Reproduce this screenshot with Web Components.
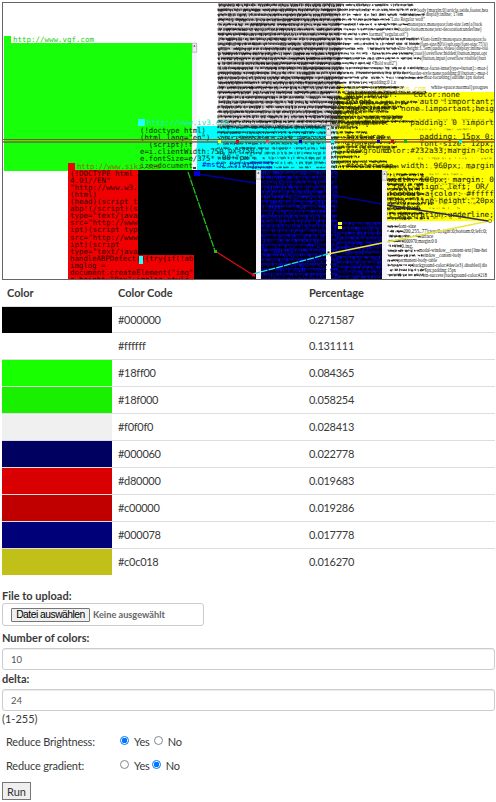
<!DOCTYPE html>
<html lang="de"><head><meta charset="utf-8"><title>Color extract</title>
<style>body{margin:0;background:#fff;font-family:Lato,sans-serif;font-size:11px;color:#3a3a3a}</style></head>
<body><color-page></color-page>
<script>
const define=(name,html,setup)=>customElements.define(name,class extends HTMLElement{
  connectedCallback(){if(this.shadowRoot)return;this.attachShadow({mode:'open'}).innerHTML=html;if(setup)setup.call(this,this.shadowRoot)}
});

define('web-collage',`<style>:host{display:block;width:496px;height:280px}svg{display:block}
text{white-space:pre}.m{font-family:"DejaVu Sans Mono",monospace;font-size:7.4px}.s{font-family:"Liberation Serif",serif;font-size:5.1px}</style>
<svg width="496" height="280" viewBox="0 0 496 280"><defs><clipPath id="c"><rect x="2" y="2" width="493" height="277.5"/></clipPath></defs><g id="g" clip-path="url(#c)"></g>
<path d="M2 2.5H495M2.5 2V279M2 279.5H495M494.5 2V279" stroke="#666" fill="none"/></svg>`,function(root){
  let seed=7;const rnd=()=>(seed=(seed*16807)%2147483647)/2147483647;
  let out='';
  const rect=(x,y,w,h,f,o=1)=>out+=`<rect x="${x}" y="${y}" width="${w}" height="${h}" fill="${f}" opacity="${o}"/>`;
  const esc=s=>s.replace(/&/g,'&amp;').replace(/</g,'&lt;');
  const text=(x,y,s,f='#000',c='m',w)=>out+=`<text class="${c}" x="${x}" y="${y}" fill="${f}"${w?` textLength="${w}" lengthAdjust="spacingAndGlyphs"`:''}>${esc(s)}</text>`;
  const endText=(x,y,s,f,c,per)=>{const w=s.length*per;text(x-w,y,s,f,c,w)};
  // overprinted rows of tiny type, drawn as short irregular pen marks
  const marks=(x0,x1,y0,y1,color,density,pitch=4.85,ragged=0,sw=.8,h=3)=>{
    let d='';
    for(let y=y0;y<y1;y+=pitch){const end=x1-rnd()*ragged;
      for(let x=x0;x<end;x+=1.15)if(rnd()<density){const t=y+rnd()*.9,b=Math.min(y1,y+h*(.65+rnd()*.5));d+=`M${x.toFixed(1)} ${t.toFixed(1)}L${(x+rnd()*1.2-.3).toFixed(1)} ${b.toFixed(1)}`;if(rnd()<.4)d+=`M${(x-.4).toFixed(1)} ${(y+1.6).toFixed(1)}h1.7`}
    }
    out+=`<path d="${d}" stroke="${color}" stroke-width="${sw}" fill="none"/>`;
  };
  const bar=(x,y,h)=>{rect(x,y,5,h,'#f7f3fa');out+=`<path d="M${x+.2} ${y+.2}h4.5v9h-4.5z" fill="#eee" stroke="#999" stroke-width=".6"/><path d="M${x+1.2} ${y+3.6}l1.2-1.7 1.2 1.7z" fill="#222"/>`};
  rect(2,2,493,278,'#fff');
  rect(4,43,188,128,'#17ff09');rect(4,36,7,7,'#17ff09');text(13,42,'http://www.vgf.com','#22cc12','m',81);
  bar(192,43,127);rect(193,167,3,2,'#444');
  rect(197,126,129,44,'#00ffff');rect(326,126,14,44,'#c4ffff');
  rect(337,92,158,78,'#ffff00');rect(387,169,108,52,'#ffff00');rect(337,85,7,7,'#ffff00');
  for(let y=3;y<125;y+=4.85)rect(218,y,122,3.1,'#8d8587',.6);
  rect(218,3,122,122,'#c8bcc0',.4);
  marks(218,340,3.5,125,'#171717',.9,4.85,0,.85,3.2);
  // long single-column rows; [last readable words, right edge]
  const rows=[['',414],['body{margin:0}article,aside,footer,hea',488],['display:inline; 17em',463],['"Lato Regular woff"',425],['monospace,monospace;font-size:1em}a{back',482],['border-bottom:none;text-decoration:underline}',482],['format("regular.otf")',408],['{font-family:monospace,monospace;fo',486],['{font-size:80%}sub,sup{font-size:75%}',488],['line-height:1.5em}audio,video{display:inline-blo',488],['(:root){overflow:hidden}button,input,opt',487],['{button,input{overflow:visible}butt',486],['"Bold woff2")',397],['moz-focus-inner[type=button]::-moz-f',488],['border-style:none;padding:0}button::-moz-f',488],['-moz-focusring{outline:1px dotted',484],['padding:0 1.x',396]];
  rows.forEach(([s,x],i)=>{const y=3.5+i*4.85,w=s.length*1.86;marks(338,x-w,y,y+3,'#171717',.86,4.85,0,.75,2.7);if(s)text(x-w,y+3.2,s,'#222','s',w)});
  marks(338,430,3.5+17*4.85,125,'#171717',.86,4.85,65,.75,2.7);
  text(431,89.3,'white-space:normal}progres','#222','s',57);
  text(346,90.5,'http://www.lycos.com','#f3e800','m',80);
  marks(345,400,85.9,91,'#222',.8,4.85,0,.75,2.7);
  marks(218,326,126,137,'#003b3d',.95,4.85,0,.9,3);
  marks(218,340,137,168,'#055b60',.65);
  marks(331,415,97,170,'#222800',.85,4.85,60,.85);
  marks(415,495,99,170,'#8d8d00',.42,9.7,25,.6,2);
  rect(345,93.2,80,1.2,'#333800');
  [[94.6,'color:none',460],[101.6,'auto !important;',494],[108.8,'none !important;heig',494],[122.8,'padding: 0 !import',494],[137.2,'padding: 15px 0;',494],[144,'font-size: 12px;',494],[151,'color:#232a33;margin-bot',494],[165.6,'width: 960px; margin',494]].forEach(([cy,s,x])=>endText(x,cy+2.2,s,'#242400','m',4.65));
  [[94.6,'auto;border:'],[101.6,'height'],[108.8,'paperwrap'],[122.8,'permanent:'],[137.2,'text-wrap'],[144,'#footer'],[151,'background-'],[165.6,'#footerwrap']].forEach(([cy,s])=>text(346,cy+2.2,s,'#242400','m',s.length*4.3));
  rect(138,170,188,110,'#000');rect(331,170,51,110,'#000');
  const blue=(x,y,x2)=>{for(let yy=y;yy<280;yy+=4.85){rect(x,yy,x2-x,2.2,'#0000c8',.8)}marks(x,x2,y,279,'#0808e6',.55,4.85,0,.7,4.1);marks(x,x2,y,279,'#000020',.6,4.85,0,.65,3.3)};
  blue(261,171,326);blue(331,171,337);blue(337,222,382);
  rect(68,170,70,110,'#f00000');rect(138,255,56,25,'#f00000');rect(68,163,7,7,'#f00000');text(77,168.5,'http://www.siki.com','#8e6c00','m',83);
  rect(138,119,7,7,'#24ffff');text(147,125,'http://www.iv3.com','#20e8d4','m',82);
  ['(!doctype html)','(html lang="en")','  (script)!f','e=i.clientWidth:750','e.fontSize=e/375*','ize=document.'].forEach((s,i)=>text(140,132.5+i*7,s,i<5?'#042e08':'#164600','m',s.length*4.4));
  text(228,153,'px>750;)','#003638');text(222,160,'00+"px"','#003638');
  text(202,167,'#msto ts(ar)','#0000d0');marks(250,273,161,169,'#0024b5',.8);
  ['(!DOCTYPE html','4.01//EN"','"http://www.w3.','(html)','(head)(script t','abp!(/script)(s','type="text/java','src="http://www','ipt)(script typ','src="http://www','ipt)(script','type="text/java'].forEach((s,i)=>text(70,175.8+i*7.08,s,'#360000','m',s.length*4.5));
  ['handleABPDetect(){try{if(!ab','imglog =','document.createElement("img"','e.height="0px";imglog.style.'].forEach((s,i)=>text(70,261+i*7.08,s,'#360000','m',s.length*4.4));
  rect(139,256,4,8,'#24ffff');
  marks(387,440,173,221,'#171700',.85,4.85,25,.85);
  marks(430,484,173,221,'#8d8d00',.45,4.85,25,.6,2);
  ['width: 500px; margin: 0','.text-align: left; OR/','footbut a{color: #fffff','13px; line-height: 20px','footbut','t-decoration:underline;'].forEach((s,i)=>text(388,181.5+i*7.05,s,'#111100','m',s.length*4.6));
  [['font-size',416],['200,255,.77);top:0;right:0;bottom:0;left:0;',487],['surface',433],['#000970;margin:0 0',437],['0.ing,',413],['modal-window__content-text{line-hei',487],['window__content-body',461],['permanent-body-table',437],['background-color:#dee1e3}.disabled{dis',487],['5px;padding:15px',456],['btn-success{background-color:#218',487]].forEach(([s,x],i)=>{const w=s.length*1.95,y=225+i*4.85;marks(388,x-w,y,y+3,'#111',.86,4.85,0,.75,2.7);text(x-w,y+3.2,s,'#111','s',w)});
  bar(256,170,110);bar(326,126,129);bar(382,171,109);rect(327.5,251.5,2,2,'#222');
  for(const [x,y,x2,y2,c] of [[188,172,215,251,'#22bf20'],[215,251,253,275,'#d90b12'],[253,274,328,254,'#20e0e8'],[328,254,382,243,'#e9e637'],[387,242,489,221,'#e9e637'],[197,174,256,183,'#0000a0'],[331,195,382,204,'#000098'],[387,205,488,221,'#292960']])out+=`<path d="M${x} ${y}L${x2} ${y2}" stroke="${c}" stroke-width="1.3"${c[1]=='2'&&c!='#292960'?' stroke-dasharray="7 1"':''}/>`;
  rect(252,273.5,3,3,'#f00018');rect(214,250,3,3,'#21bf21');rect(194,171,6,5,'#0000dc');rect(338,222,4,3,'#ffff1b');rect(338,226,4,3,'#ffff1b');out+='<circle cx="490" cy="221" r="1.7" fill="#f5ff00" stroke="#555" stroke-width=".6"/>';
  rect(2,139,493,1,'#64561c',.9);rect(2,141,493,1.2,'#c75a26',.9);rect(2,142.3,493,.7,'#555',.8);
  for(const [x,c] of [[218,'#ff0'],[236,'#e00'],[266,'#f44'],[299,'#00b'],[331,'#0ff'],[377,'#00e'],[391,'#d00'],[404,'#0b3'],[459,'#0ff']])rect(x,140,3,3,c);
  root.querySelector('#g').innerHTML=out;
});

define('color-row',`<style>:host{display:grid;grid-template-columns:110px 191px 1fr;height:26px;border-top:1px solid #ddd;line-height:26px;font-size:11px}span{padding-left:6px;letter-spacing:-.28px}</style><i></i><span></span><span></span>`,function(r){
 r.querySelector('i').style.background=this.getAttribute('code');const s=r.querySelectorAll('span');s[0].textContent=this.getAttribute('code');s[1].textContent=this.getAttribute('share')});
define('color-table',`<style>:host{display:block;margin:0 1px 0 2px}.h{display:grid;grid-template-columns:110px 191px 1fr;height:26px;line-height:26px;font-weight:bold}.h span{padding-left:6px}.h span:first-child{padding-left:5px}::slotted(:first-child),::slotted(:last-child){height:25px!important}</style><div class="h"><span>Color</span><span>Color Code</span><span>Percentage</span></div><slot></slot>`);
define('text-field',`<style>:host{display:block}label{display:block;font-weight:bold;line-height:17px;padding-bottom:2px}input{box-sizing:border-box;display:block;width:100%;height:22px;padding:1px 8px;border:1px solid #ccc;border-radius:3px;box-shadow:inset 0 1px 1px #00000013;font:9.5px Lato,sans-serif;color:#555}</style><label></label><input>`,function(r){r.querySelector('label').textContent=this.getAttribute('label');r.querySelector('input').value=this.getAttribute('value')});
define('file-field',`<style>:host{display:block}label{display:block;font-weight:bold;line-height:11px;padding-bottom:2px}.b{box-sizing:border-box;width:202px;height:23px;border:1px solid #ccc;border-radius:3px;display:flex;align-items:center;padding-left:8px;gap:3px;font-size:9.2px;font-weight:bold;color:#666}button{box-sizing:border-box;width:79px;height:14px;padding:0;border:1px solid #767676;border-radius:1px;background:#efefef;font:10.3px/12px "Liberation Sans",sans-serif;letter-spacing:-.5px;color:#000;white-space:nowrap}</style><label>File to upload:</label><div class="b"><button>Datei auswählen</button><span>Keine ausgewählt</span></div>`);
define('yes-no',`<style>:host{display:flex;height:24px;align-items:center}.n{width:114px;padding-left:4px}span{letter-spacing:-.18px}i{box-sizing:border-box;width:9px;height:9px;border:1px solid #888;border-radius:50%;margin-right:5px;position:relative;top:-1px}i.on{border-color:#0075ff;background:radial-gradient(circle,#0075ff 0 2.6px,#fff 3px)}.y{margin-right:4px}:host([value=no]) .y{margin-right:2px}</style><span class="n"></span><i></i><span class="y">Yes</span><i></i><span>No</span>`,function(r){r.querySelector('.n').textContent=this.getAttribute('label');r.querySelectorAll('i')[this.getAttribute('value')=='yes'?0:1].className='on'});
define('color-form',`<style>:host{display:block;padding:16px 1px 0 2px}.hint{line-height:16px}.choices{padding-top:2px}button{display:block;box-sizing:border-box;margin-top:5px;width:29px;height:18px;padding:0;border:1px solid #767676;background:#efefef;font:11px Lato,sans-serif;color:#333}</style>
<file-field></file-field><text-field label="Number of colors:" value="10" style="margin-top:3px"></text-field><text-field label="delta:" value="24"></text-field><div class="hint">(1-255)</div><div class="choices"><yes-no label="Reduce Brightness:" value="yes"></yes-no><yes-no label="Reduce gradient:" value="no"></yes-no></div><button>Run</button>`);
define('color-page',`<style>:host{display:block;width:496px;height:802px;overflow:hidden;background:#fff}</style><web-collage></web-collage><color-table>${[['#000000','0.271587'],['#ffffff','0.131111'],['#18ff00','0.084365'],['#18f000','0.058254'],['#f0f0f0','0.028413'],['#000060','0.022778'],['#d80000','0.019683'],['#c00000','0.019286'],['#000078','0.017778'],['#c0c018','0.016270']].map(a=>`<color-row code="${a[0]}" share="${a[1]}"></color-row>`).join('')}</color-table><color-form></color-form>`);
</script></body></html>
